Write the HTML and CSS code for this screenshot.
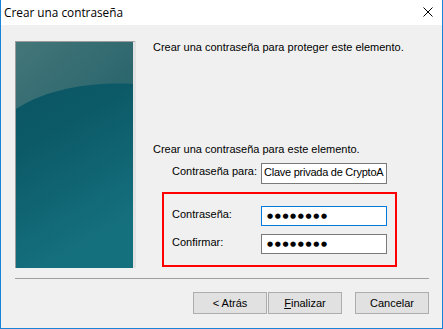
FILE: index.html
```html
<!DOCTYPE html>
<html lang="es">
<head>
    <meta charset="UTF-8">
    <title>Crear una contraseña</title>
    <link rel="stylesheet" href="styles.css">
</head>
<body>
    <div class="window">
        <div class="titlebar">
            <span class="title">Crear una contraseña</span>
            <svg class="close" width="10" height="10" viewBox="0 0 10 10">
                <path d="M0.5 0.5 L9.5 9.5 M9.5 0.5 L0.5 9.5" stroke="#000" stroke-width="1"/>
            </svg>
        </div>

        <div class="dialog">
            <div class="main">
                <div class="banner">
                    <svg width="117" height="226" viewBox="0 0 117 226" preserveAspectRatio="none">
                        <defs>
                            <linearGradient id="bg" x1="0" y1="0" x2="0.3" y2="1">
                                <stop offset="0" stop-color="#0a5260"/>
                                <stop offset="0.45" stop-color="#0c5a68"/>
                                <stop offset="1" stop-color="#15707e"/>
                            </linearGradient>
                            <linearGradient id="gloss" x1="0" y1="0" x2="1" y2="0.6">
                                <stop offset="0" stop-color="#437679"/>
                                <stop offset="1" stop-color="#2b666d"/>
                            </linearGradient>
                        </defs>
                        <rect width="117" height="226" fill="url(#bg)"/>
                        <path d="M0 0 H117 V42 C85 40 35 44 0 67 Z" fill="url(#gloss)"/>
                    </svg>
                </div>

                <div class="content">
                    <p class="intro">Crear una contraseña para proteger este elemento.</p>
                    <p class="hint">Crear una contraseña para este elemento.</p>

                    <div class="row for-row">
                        <label>Contraseña para:</label>
                        <div class="field">Clave privada de CryptoA</div>
                    </div>

                    <div class="highlight">
                        <div class="row">
                            <label>Contraseña:</label>
                            <div class="field secret focused"><span class="dots">●●●●●●●●</span></div>
                        </div>
                        <div class="row">
                            <label>Confirmar:</label>
                            <div class="field secret"><span class="dots">●●●●●●●●</span></div>
                        </div>
                    </div>
                </div>
            </div>

            <div class="separator"></div>

            <div class="buttons">
                <button>&lt; Atrás</button>
                <button><u>F</u>inalizar</button>
                <button class="cancel">Cancelar</button>
            </div>
        </div>
    </div>
</body>
</html>
```

FILE: styles.css
```css
* {
    box-sizing: border-box;
}
body {
    margin: 0;
    font-family: "Liberation Sans", Arial, sans-serif;
    font-size: 11px;
    color: #000;
}
.window {
    width: 443px;
    height: 329px;
    border: 1px solid #1883d7;
    border-top: none;
    background: #f0f0f0;
    display: flex;
    flex-direction: column;
}
.titlebar {
    height: 25px;
    background: #fff;
    display: flex;
    align-items: center;
    justify-content: space-between;
    padding: 0 9px 0 3px;
}
.title {
    font-family: "Open Sans", "Noto Sans", sans-serif;
    font-size: 11.8px;
    margin-top: -1px;
}
.close {
    display: block;
    margin-top: -1px;
}
.dialog {
    flex: 1;
    padding: 16px 13px 0 14px;
}
.main {
    display: flex;
    height: 227px;
}
.banner {
    width: 121px;
    height: 227px;
    border-top: 1px solid #9c9c9c;
    border-left: 1px solid #9c9c9c;
    border-right: 3px solid #e2e2e2;
}
.banner svg {
    display: block;
}
.content {
    margin-left: 17px;
    flex: 1;
}
p {
    margin: 0;
    line-height: 13px;
}
.hint {
    margin-top: 89px;
}
.row {
    display: flex;
    align-items: center;
}
.row label {
    width: 89px;
    line-height: 13px;
    margin-bottom: 4px;
}
.for-row {
    margin: 7px 0 0 19px;
}
.field {
    width: 126px;
    height: 21px;
    background: #fff;
    border: 1px solid #7a7a7a;
    padding: 0 2px;
    line-height: 17px;
    letter-spacing: -0.25px;
    white-space: nowrap;
    overflow: hidden;
}
.highlight {
    margin: 8px 0 0 9px;
    width: 235px;
    border: 2px solid #ff0000;
    padding: 12px 7px 11px 8px;
    display: flex;
    flex-direction: column;
    gap: 8px;
}
.field.secret {
    height: 20px;
    display: flex;
    align-items: center;
    padding: 0 5px;
    letter-spacing: normal;
}
.field.focused {
    border-color: #0078d7;
}
.dots {
    font-family: "DejaVu Sans", sans-serif;
    font-size: 7px;
    letter-spacing: 1.6px;
    line-height: 8px;
}
.separator {
    margin-top: 10px;
    border-top: 1px solid #a0a0a0;
}
.buttons {
    display: flex;
    justify-content: flex-end;
    gap: 1px;
    margin-top: 13px;
}
button {
    width: 74px;
    height: 22px;
    background: #e1e1e1;
    border: 1px solid #adadad;
    font-family: "Liberation Sans", Arial, sans-serif;
    font-size: 11px;
    color: #000;
    padding: 0;
}
button.cancel {
    margin-left: 12px;
}
```
